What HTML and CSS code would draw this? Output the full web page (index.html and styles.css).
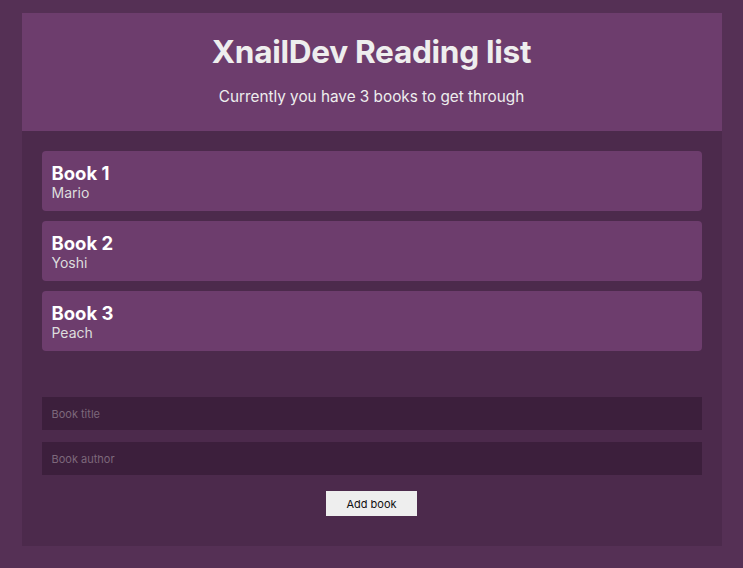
FILE: index.html
```html
<!DOCTYPE html>
<html lang="en">
<head>
<meta charset="utf-8">
<title>XnailDev Reading list</title>
<link rel="stylesheet" href="styles.css">
</head>
<body>
<div class="app">
  <header class="navbar">
    <h1 class="navbar-title">XnailDev Reading list</h1>
    <p class="navbar-sub">Currently you have 3 books to get through</p>
  </header>
  <ul class="book-list">
    <li class="book"><div class="book-title">Book 1</div><div class="book-author">Mario</div></li>
    <li class="book"><div class="book-title">Book 2</div><div class="book-author">Yoshi</div></li>
    <li class="book"><div class="book-title">Book 3</div><div class="book-author">Peach</div></li>
  </ul>
  <form class="book-form">
    <input class="text-input" type="text" placeholder="Book title">
    <input class="text-input" type="text" placeholder="Book author">
    <button class="submit-btn" type="button">Add book</button>
  </form>
</div>
</body>
</html>
```
FILE: styles.css
```css
* { box-sizing: border-box; }
html, body { margin: 0; }
body {
  background: #553055;
  font-family: Inter, "Noto Sans", sans-serif;
  color: #eee;
  padding-top: 13px;
}
.app {
  width: 700px;
  margin: 0 auto;
  background: #4c2a4c;
}
.navbar {
  background: #6d3d6d;
  text-align: center;
  padding: 10px 20px;
}
.navbar-title {
  margin: 10px 0 0;
  font-size: 31.6px;
  font-weight: 700;
  line-height: 38px;
  letter-spacing: -0.3px;
}
.navbar-sub {
  margin: 17px 0 15px;
  font-size: 15.3px;
  line-height: 18px;
}
.book-list {
  list-style: none;
  margin: 0;
  padding: 20px 20px;
  display: flex;
  flex-direction: column;
  gap: 10px;
}
.book {
  background: #6d3d6d;
  border-radius: 4px;
  padding: 11px 10px 9px;
  height: 60px;
}
.book-title {
  font-weight: 700;
  color: #fff;
  font-size: 18.5px;
  line-height: 22px;
}
.book-author {
  font-size: 14px;
  line-height: 18px;
  color: #ddd;
}
.book-form {
  padding: 20px;
  display: flex;
  flex-direction: column;
}
.text-input {
  display: block;
  width: 100%;
  margin: 6px 0;
  padding: 10px;
  height: 33px;
  border: 0;
  background: #3c1f3c;
  color: #fff;
  font-family: Inter, "Noto Sans", sans-serif;
  font-size: 11px;
  outline: none;
}
.text-input::placeholder { color: #7d687b; }
.submit-btn {
  display: block;
  margin: 10px auto;
  background: #eee;
  border: 0;
  padding: 0 20px;
  height: 25px;
  font-family: Inter, "Noto Sans", sans-serif;
  font-size: 11px;
  color: #111;
}
```
